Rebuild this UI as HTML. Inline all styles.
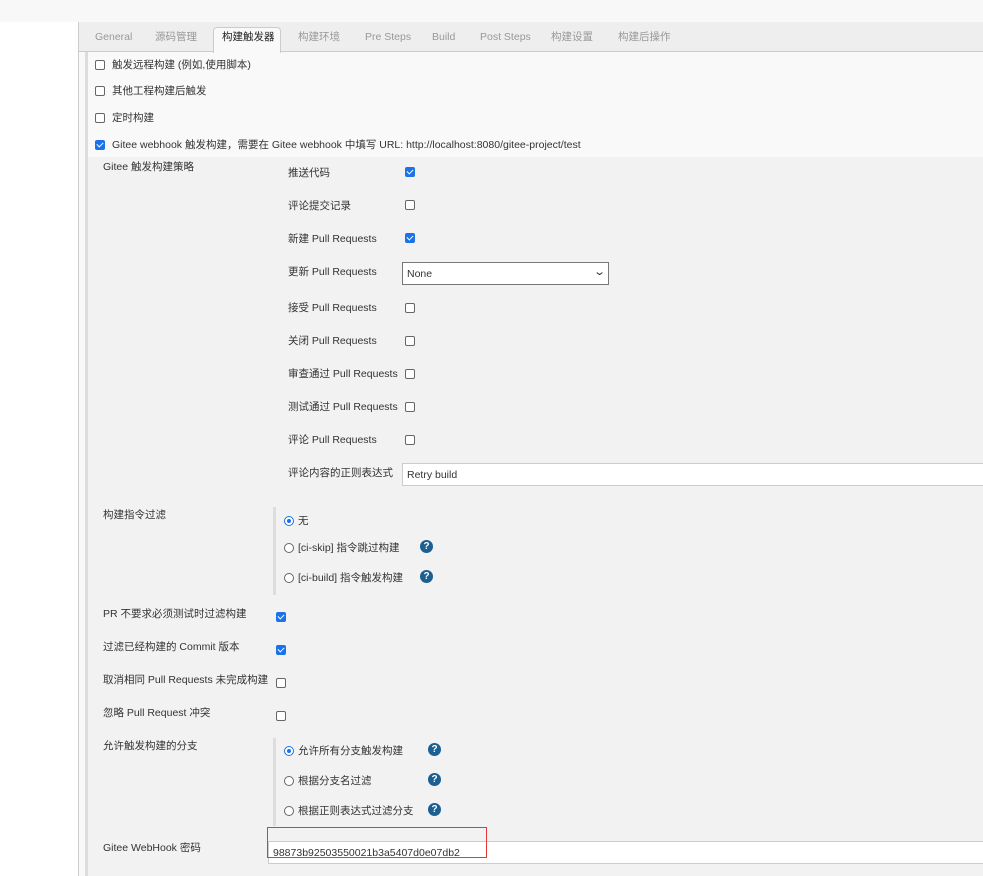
<!DOCTYPE html>
<html><head><meta charset="utf-8"><style>
*{margin:0;padding:0;box-sizing:border-box}
body{width:983px;height:876px;overflow:hidden;background:#fff;font-family:"Liberation Sans","Noto Sans CJK SC",sans-serif;font-size:10.5px;color:#333;position:relative}
.a{position:absolute;white-space:nowrap;line-height:14px}
.cb{position:absolute;width:10px;height:10px;border:1px solid #666;border-radius:2px;background:#fff}
.ck{position:absolute;width:10px;height:10px;border-radius:2px;background:#1a73e8}
.ck:after{content:"";position:absolute;left:3px;top:1px;width:3px;height:5px;border:solid #fff;border-width:0 1.5px 1.5px 0;transform:rotate(45deg)}
.rd{position:absolute;width:10px;height:10px;border:1px solid #666;border-radius:50%;background:#fff}
.rs{position:absolute;width:10px;height:10px;border:1px solid #1a73e8;border-radius:50%;background:#fff}
.rs:after{content:"";position:absolute;left:2px;top:2px;width:4px;height:4px;border-radius:50%;background:#1a73e8}
.hp{position:absolute;width:13px;height:13px;border-radius:50%;background:#1c5f93;color:#fff;font-weight:bold;font-size:10px;text-align:center;line-height:13px}
.tab{position:absolute;top:30px;color:#999;line-height:14px;white-space:nowrap}
</style></head><body>
<div class="a" style="left:0;top:0;width:983px;height:22px;background:#f8f8f8"></div>
<div class="a" style="left:78px;top:22px;width:905px;height:854px;background:#f9f9f9;border-left:1px solid #ccc"></div>
<div class="a" style="left:79px;top:22px;width:904px;height:30px;background:#eee;border-bottom:1px solid #ccc"></div>
<div class="a" style="left:213px;top:27px;width:68px;height:26px;background:#f9f9f9;border:1px solid #ccc;border-bottom:none;border-radius:4px 4px 0 0"></div>
<span class="tab" style="left:95px">General</span>
<span class="tab" style="left:155px">源码管理</span>
<span class="tab" style="left:222px;color:#222">构建触发器</span>
<span class="tab" style="left:298px">构建环境</span>
<span class="tab" style="left:365px">Pre Steps</span>
<span class="tab" style="left:432px">Build</span>
<span class="tab" style="left:480px">Post Steps</span>
<span class="tab" style="left:551px">构建设置</span>
<span class="tab" style="left:618px">构建后操作</span>
<div class="a" style="left:85px;top:52px;width:3px;height:824px;background:#ddd"></div>
<div class="a" style="left:88px;top:157px;width:895px;height:719px;background:#f2f2f2"></div>

<div class="cb" style="left:95px;top:60px"></div><span class="a" style="left:112px;top:58px">触发远程构建 (例如,使用脚本)</span>
<div class="cb" style="left:95px;top:86px"></div><span class="a" style="left:112px;top:84px">其他工程构建后触发</span>
<div class="cb" style="left:95px;top:113px"></div><span class="a" style="left:112px;top:111px">定时构建</span>
<div class="ck" style="left:95px;top:140px"></div><span class="a" style="left:112px;top:138px">Gitee webhook 触发构建，需要在 Gitee webhook 中填写 URL: http://localhost:8080/gitee-project/test</span>

<span class="a" style="left:103px;top:160px">Gitee 触发构建策略</span>
<span class="a" style="left:288px;top:166px">推送代码</span><div class="ck" style="left:405px;top:167px"></div>
<span class="a" style="left:288px;top:199px">评论提交记录</span><div class="cb" style="left:405px;top:200px"></div>
<span class="a" style="left:288px;top:232px">新建 Pull Requests</span><div class="ck" style="left:405px;top:233px"></div>
<span class="a" style="left:288px;top:265px">更新 Pull Requests</span>
<div class="a" style="left:402px;top:262px;width:207px;height:23px;background:#fff;border:1px solid #777"><span class="a" style="left:4px;top:4px">None</span><span class="a" style="right:4px;top:2px;font-size:11px;transform:scaleX(1.4)">⌄</span></div>
<span class="a" style="left:288px;top:301px">接受 Pull Requests</span><div class="cb" style="left:405px;top:303px"></div>
<span class="a" style="left:288px;top:334px">关闭 Pull Requests</span><div class="cb" style="left:405px;top:336px"></div>
<span class="a" style="left:288px;top:367px">审查通过 Pull Requests</span><div class="cb" style="left:405px;top:369px"></div>
<span class="a" style="left:288px;top:400px">测试通过 Pull Requests</span><div class="cb" style="left:405px;top:402px"></div>
<span class="a" style="left:288px;top:433px">评论 Pull Requests</span><div class="cb" style="left:405px;top:435px"></div>
<span class="a" style="left:288px;top:466px">评论内容的正则表达式</span>
<div class="a" style="left:402px;top:463px;width:590px;height:23px;background:#fff;border:1px solid #ccc"><span class="a" style="left:4px;top:4px">Retry build</span></div>

<span class="a" style="left:103px;top:508px">构建指令过滤</span>
<div class="a" style="left:273px;top:507px;width:3px;height:88px;background:#ddd"></div>
<div class="rs" style="left:284px;top:516px"></div><span class="a" style="left:298px;top:514px">无</span>
<div class="rd" style="left:284px;top:543px"></div><span class="a" style="left:298px;top:541px">[ci-skip] 指令跳过构建</span><div class="hp" style="left:420px;top:540px">?</div>
<div class="rd" style="left:284px;top:573px"></div><span class="a" style="left:298px;top:571px">[ci-build] 指令触发构建</span><div class="hp" style="left:420px;top:570px">?</div>

<span class="a" style="left:103px;top:607px">PR 不要求必须测试时过滤构建</span><div class="ck" style="left:276px;top:612px"></div>
<span class="a" style="left:103px;top:640px">过滤已经构建的 Commit 版本</span><div class="ck" style="left:276px;top:645px"></div>
<span class="a" style="left:103px;top:673px">取消相同 Pull Requests 未完成构建</span><div class="cb" style="left:276px;top:678px"></div>
<span class="a" style="left:103px;top:706px">忽略 Pull Request 冲突</span><div class="cb" style="left:276px;top:711px"></div>

<span class="a" style="left:103px;top:739px">允许触发构建的分支</span>
<div class="a" style="left:273px;top:738px;width:3px;height:88px;background:#ddd"></div>
<div class="rs" style="left:284px;top:746px"></div><span class="a" style="left:298px;top:744px">允许所有分支触发构建</span><div class="hp" style="left:428px;top:743px">?</div>
<div class="rd" style="left:284px;top:776px"></div><span class="a" style="left:298px;top:774px">根据分支名过滤</span><div class="hp" style="left:428px;top:773px">?</div>
<div class="rd" style="left:284px;top:806px"></div><span class="a" style="left:298px;top:804px">根据正则表达式过滤分支</span><div class="hp" style="left:428px;top:803px">?</div>

<span class="a" style="left:103px;top:841px">Gitee WebHook 密码</span>
<div class="a" style="left:268px;top:841px;width:720px;height:23px;background:#fff;border:1px solid #ccc"><span class="a" style="left:4px;top:4px">98873b92503550021b3a5407d0e07db2</span></div>
<div class="a" style="left:267px;top:827px;width:220px;height:31px;border:1px solid #e53935"></div>
</body></html>
